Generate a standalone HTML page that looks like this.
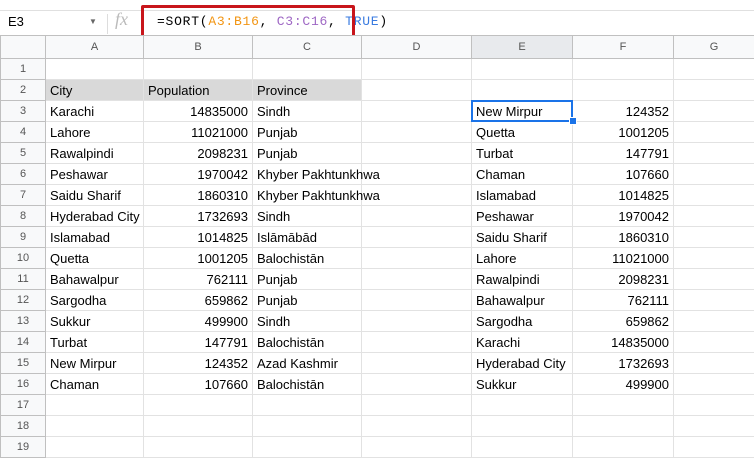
<!DOCTYPE html>
<html><head><meta charset="utf-8"><style>
body{margin:0;width:754px;height:452px;overflow:hidden;background:#fff;font-family:"Liberation Sans",Arial,sans-serif;position:relative}
.top{position:absolute;left:0;top:0;width:754px;height:10px;border-bottom:1px solid #e0e0e0}
.nb{position:absolute;left:8px;top:14px;font-size:13px;color:#000}
.arr{position:absolute;left:89px;top:17px;font-size:8px;color:#666}
.fx{position:absolute;left:115px;top:9px;font-size:18px;color:#bbb;font-style:italic;font-family:"Liberation Serif",serif}
.sep{position:absolute;left:107px;top:14px;width:1px;height:20px;background:#ddd}
.red{position:absolute;left:141px;top:5px;width:208px;height:28px;border:3px solid #c8151b;border-radius:2px}
.f{position:absolute;left:157px;top:14px;font-family:"Liberation Mono",monospace;font-size:13px;letter-spacing:0.75px;color:#000;white-space:pre}
table{position:absolute;left:0;top:35px;width:754px;border-collapse:collapse;table-layout:fixed}
td{border:1px solid #e2e2e2;height:21px;padding:0 4px;font-size:13px;color:#000;white-space:nowrap;overflow:visible;box-sizing:border-box}
tr.h td{height:23px;background:#f8f9fa;color:#555;font-size:11px;text-align:center;border-color:#c0c0c0}
td.r{background:#f8f9fa;color:#555;font-size:11px;text-align:center;border-color:#c0c0c0;padding:0}
td.n{text-align:right}
tr.g td.c{background:#d9d9d9}
.sel{position:absolute;left:471px;top:100px;width:98px;height:18px;border:2px solid #1a73e8}
.hd{position:absolute;left:569px;top:117px;width:6px;height:6px;background:#1a73e8;border:1px solid #fff}
</style></head><body>
<div class="top"></div>
<div class="nb">E3</div><div class="arr">▼</div><div class="sep"></div><div class="fx">fx</div>
<div class="f">=SORT(<span style="color:#f29513">A3:B16</span>, <span style="color:#9e67c4">C3:C16</span>, <span style="color:#3a7be0">TRUE</span>)</div>
<div class="red"></div>
<table>
<colgroup><col style="width:45px"><col style="width:98px"><col style="width:109px"><col style="width:109px"><col style="width:110px"><col style="width:101px"><col style="width:101px"><col style="width:81px"></colgroup>
<tr class="h"><td></td><td>A</td><td>B</td><td>C</td><td>D</td><td style="background:#e8eaed">E</td><td>F</td><td>G</td></tr>
<tr><td class="r">1</td><td></td><td></td><td></td><td></td><td></td><td></td><td></td></tr>
<tr class="g"><td class="r">2</td><td class="c">City</td><td class="c">Population</td><td class="c">Province</td><td></td><td></td><td></td><td></td></tr>
<tr><td class="r">3</td><td>Karachi</td><td class="n">14835000</td><td>Sindh</td><td></td><td>New Mirpur</td><td class="n">124352</td><td></td></tr>
<tr><td class="r">4</td><td>Lahore</td><td class="n">11021000</td><td>Punjab</td><td></td><td>Quetta</td><td class="n">1001205</td><td></td></tr>
<tr><td class="r">5</td><td>Rawalpindi</td><td class="n">2098231</td><td>Punjab</td><td></td><td>Turbat</td><td class="n">147791</td><td></td></tr>
<tr><td class="r">6</td><td>Peshawar</td><td class="n">1970042</td><td>Khyber Pakhtunkhwa</td><td></td><td>Chaman</td><td class="n">107660</td><td></td></tr>
<tr><td class="r">7</td><td>Saidu Sharif</td><td class="n">1860310</td><td>Khyber Pakhtunkhwa</td><td></td><td>Islamabad</td><td class="n">1014825</td><td></td></tr>
<tr><td class="r">8</td><td>Hyderabad City</td><td class="n">1732693</td><td>Sindh</td><td></td><td>Peshawar</td><td class="n">1970042</td><td></td></tr>
<tr><td class="r">9</td><td>Islamabad</td><td class="n">1014825</td><td>Islāmābād</td><td></td><td>Saidu Sharif</td><td class="n">1860310</td><td></td></tr>
<tr><td class="r">10</td><td>Quetta</td><td class="n">1001205</td><td>Balochistān</td><td></td><td>Lahore</td><td class="n">11021000</td><td></td></tr>
<tr><td class="r">11</td><td>Bahawalpur</td><td class="n">762111</td><td>Punjab</td><td></td><td>Rawalpindi</td><td class="n">2098231</td><td></td></tr>
<tr><td class="r">12</td><td>Sargodha</td><td class="n">659862</td><td>Punjab</td><td></td><td>Bahawalpur</td><td class="n">762111</td><td></td></tr>
<tr><td class="r">13</td><td>Sukkur</td><td class="n">499900</td><td>Sindh</td><td></td><td>Sargodha</td><td class="n">659862</td><td></td></tr>
<tr><td class="r">14</td><td>Turbat</td><td class="n">147791</td><td>Balochistān</td><td></td><td>Karachi</td><td class="n">14835000</td><td></td></tr>
<tr><td class="r">15</td><td>New Mirpur</td><td class="n">124352</td><td>Azad Kashmir</td><td></td><td>Hyderabad City</td><td class="n">1732693</td><td></td></tr>
<tr><td class="r">16</td><td>Chaman</td><td class="n">107660</td><td>Balochistān</td><td></td><td>Sukkur</td><td class="n">499900</td><td></td></tr>
<tr><td class="r">17</td><td></td><td></td><td></td><td></td><td></td><td></td><td></td></tr>
<tr><td class="r">18</td><td></td><td></td><td></td><td></td><td></td><td></td><td></td></tr>
<tr><td class="r">19</td><td></td><td></td><td></td><td></td><td></td><td></td><td></td></tr>
</table>
<div class="sel"></div><div class="hd"></div>
</body></html>
